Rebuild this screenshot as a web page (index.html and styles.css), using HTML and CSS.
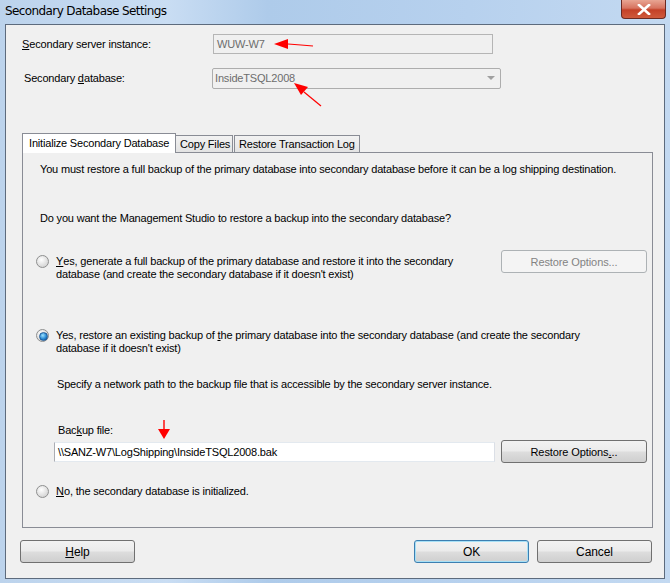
FILE: index.html
```html
<!DOCTYPE html>
<html lang="en">
  <head>
    <meta charset="UTF-8" />
    <title>Secondary Database Settings</title>
    <link rel="stylesheet" href="styles.css">
  </head>
  <body>
    <div class="window">
      <!-- 标题栏 -->
      <div class="titlebar">
        <span class="title">Secondary Database Settings</span>
        <a class="close" href="#">
          <svg width="14" height="11" viewBox="0 0 14 11">
            <path d="M2 1 L12 10 M12 1 L2 10" stroke="#fff" stroke-width="2.6" stroke-linecap="square" />
          </svg>
        </a>
      </div>

      <!-- 客户区 -->
      <div class="client">
        <div class="fields">
          <label class="lbl lbl1"><u>S</u>econdary server instance:</label>
          <div class="textbox disabled">WUW-W7</div>
          <label class="lbl lbl2">Secondary <u>d</u>atabase:</label>
          <div class="combo disabled">
            <span>InsideTSQL2008</span>
            <i class="caret"></i>
          </div>
        </div>

        <div class="tabs">
          <div class="tab active">Initialize Secondary Database</div>
          <div class="tab">Copy Files</div>
          <div class="tab">Restore Transaction Log</div>
        </div>

        <div class="panel">
          <p class="msg">You must restore a full backup of the primary database into secondary database before it can be a log shipping destination.</p>
          <p class="msg q">Do you want the Management Studio to restore a backup into the secondary database?</p>

          <div class="opt opt1">
            <span class="radio"></span>
            <p><u>Y</u>es, generate a full backup of the primary database and restore it into the secondary database (and create the secondary database if it doesn't exist)</p>
            <button class="btn" disabled>Restore Options...</button>
          </div>

          <div class="opt opt2">
            <span class="radio checked"></span>
            <p>Yes, restore an existing backup of <u>t</u>he primary database into the secondary database (and create the secondary database if it doesn't exist)</p>
          </div>

          <p class="hint">Specify a network path to the backup file that is accessible by the secondary server instance.</p>
          <label class="lbl3">Bac<u>k</u>up file:</label>
          <div class="filerow">
            <div class="textbox white">\\SANZ-W7\LogShipping\InsideTSQL2008.bak</div>
            <button class="btn">Restore Options<u>.</u>..</button>
          </div>

          <div class="opt opt3">
            <span class="radio"></span>
            <p><u>N</u>o, the secondary database is initialized.</p>
          </div>
        </div>

        <div class="footer">
          <button class="btn wide"><u>H</u>elp</button>
          <div class="right">
            <button class="btn wide default">OK</button>
            <button class="btn wide">Cancel</button>
          </div>
        </div>

        <!-- 红色箭头标注 -->
        <svg class="marks" width="660" height="560" viewBox="0 0 660 560">
          <g fill="#f00" stroke="#f00">
            <path d="M307 21 L295 20 L282 19" stroke-width="1.2" fill="none" />
            <path d="M268 19 L282 14 L282 24 Z" stroke="none" />
            <path d="M315 81 L298 67" stroke-width="1.2" fill="none" />
            <path d="M288 58 L302 62 L295 70 Z" stroke="none" />
            <path d="M158 395 L158 404" stroke-width="1.4" fill="none" />
            <path d="M152 404 L164 404 L158 414 Z" stroke="none" />
          </g>
        </svg>
      </div>
    </div>
  </body>
</html>
```

FILE: styles.css
```css
/* 清除默认样式 */
* {
  margin: 0;
  padding: 0;
  box-sizing: border-box;
}
body {
  width: 670px;
  height: 583px;
  overflow: hidden;
  font: 11px/13px 'Liberation Sans', Arial, sans-serif;
  letter-spacing: -0.18px;
  color: #000;
}
u {
  text-decoration: underline;
  letter-spacing: 0;
}

/* 窗口外框 */
.window {
  width: 670px;
  height: 583px;
  background: linear-gradient(90deg, #bcd3ec 0%, #c9ddf3 25%, #aecbea 40%, #b7d1ee 70%, #c3d9f1 100%);
  padding: 0 5px 4px 5px;
  display: flex;
  flex-direction: column;
}
.titlebar {
  height: 24px;
  display: flex;
  justify-content: space-between;
  align-items: flex-start;
}
.title {
  font: 12px 'DejaVu Sans', sans-serif;
  letter-spacing: -0.6px;
  padding-top: 4px;
  color: #000;
}
.close {
  width: 45px;
  height: 19px;
  margin-right: -1px;
  border: 1px solid #6b2a22;
  border-top: none;
  border-radius: 0 0 4px 4px;
  background: linear-gradient(#e8a593 0%, #d7735f 45%, #c44128 55%, #cf5a3c 100%);
  display: flex;
  justify-content: center;
  align-items: center;
}

/* 客户区 */
.client {
  flex: 1;
  position: relative;
  background: #f0f0f0;
  border: 1px solid #5d6b7d;
  padding: 9px 12px 0 16px;
}

.fields {
  display: grid;
  grid-template-columns: 191px auto;
  grid-template-rows: 20px 20px;
  row-gap: 14px;
  align-items: center;
}
.lbl2 {
  padding-left: 2px;
}
.textbox {
  height: 20px;
  border: 1px solid #abadb3;
  padding: 3px 3px;
  white-space: nowrap;
}
.textbox.disabled {
  width: 280px;
  background: #f0f0f0;
  color: #6d6d6d;
  border-color: #b5b5b5;
}
.combo {
  width: 289px;
  height: 21px;
  margin-left: -1px;
  border: 1px solid #adadad;
  border-radius: 2px;
  padding: 2px 2px;
  color: #6d6d6d;
  display: flex;
  justify-content: space-between;
  align-items: center;
}
.caret {
  width: 0;
  height: 0;
  border-left: 4px solid transparent;
  border-right: 4px solid transparent;
  border-top: 4px solid #a0a0a0;
  margin-right: 3px;
}

/* 选项卡 */
.tabs {
  margin-top: 45px;
  display: flex;
  align-items: flex-end;
  height: 19px;
  position: relative;
  z-index: 1;
}
.tab {
  height: 17px;
  padding: 2px 4px 0 4px;
  border: 1px solid #898c95;
  border-bottom: none;
  background: linear-gradient(#f2f2f2, #e3e3e3);
  white-space: nowrap;
}
.tab.active {
  width: 154px;
  height: 20px;
  margin-bottom: -1px;
  padding: 3px 6px 0 6px;
  background: #fff;
  z-index: 2;
}
.tab:nth-child(2) {
  width: 58px;
  margin-left: -1px;
}
.tab:nth-child(3) {
  width: 126px;
  margin-left: 1px;
}

.panel {
  width: 631px;
  height: 376px;
  border: 1px solid #898c95;
  background: #f0f0f0;
  padding: 10px 0 0 13px;
  position: relative;
}
.msg {
  white-space: nowrap;
  margin-left: 4px;
}
.q {
  margin-top: 36px;
}

.opt {
  display: flex;
  align-items: flex-start;
}
.opt p {
  margin-left: 7px;
}
.opt1 {
  margin-top: 25px;
}
.opt1 p {
  width: 420px;
  margin-top: 5px;
}
.opt1 .btn {
  margin-left: 25px;
  width: 146px;
}
.opt2 {
  margin-top: 48px;
}
.opt2 p {
  width: 540px;
}
.opt3 {
  margin-top: 22px;
}
.radio {
  width: 13px;
  height: 13px;
  border-radius: 50%;
  border: 1px solid #8e8f8f;
  background: radial-gradient(circle at 40% 35%, #fff 0%, #e6e6e6 45%, #c9c9c9 100%);
  flex: none;
  position: relative;
}
.opt1 .radio {
  margin-top: 5px;
}
.radio.checked::after {
  content: "";
  position: absolute;
  left: 2px;
  top: 2px;
  width: 7px;
  height: 7px;
  border-radius: 50%;
  background: radial-gradient(circle at 40% 35%, #9ce2ff 0%, #2a8ad4 55%, #0d4e91 100%);
  border: 1px solid #215d9a;
}
.hint {
  margin-top: 23px;
  margin-left: 21px;
  white-space: nowrap;
}
.lbl3 {
  display: block;
  margin-top: 33px;
  margin-left: 22px;
}
.filerow {
  margin-top: 3px;
  margin-left: 18px;
  display: flex;
  align-items: center;
}
.textbox.white {
  width: 441px;
  flex: none;
  background: #fff;
  border-color: #e3e9ef #dbdfe6 #e3e9ef #abadb3;
}
.filerow .btn {
  width: 146px;
  flex: none;
  margin-left: 6px;
}

/* 按钮 */
.btn {
  height: 23px;
  border: 1px solid #707070;
  border-radius: 3px;
  background: linear-gradient(#f2f2f2 0%, #ebebeb 48%, #dddddd 52%, #cfcfcf 100%);
  font: 11px 'Liberation Sans', Arial, sans-serif;
  letter-spacing: -0.1px;
  color: #000;
}
.btn:disabled {
  border-color: #adb2b5;
  background: #f4f4f4;
  color: #838383;
}
.btn.wide {
  width: 115px;
  font-size: 12px;
}
.btn.default {
  border-color: #3c7fb1;
  box-shadow: inset 0 0 0 1px #a7e0f6;
}

.footer {
  margin-top: 12px;
  display: flex;
  justify-content: space-between;
  width: 632px;
  margin-left: -2px;
}
.right {
  display: flex;
  gap: 8px;
}

.marks {
  position: absolute;
  left: 0;
  top: 0;
  pointer-events: none;
}
```
